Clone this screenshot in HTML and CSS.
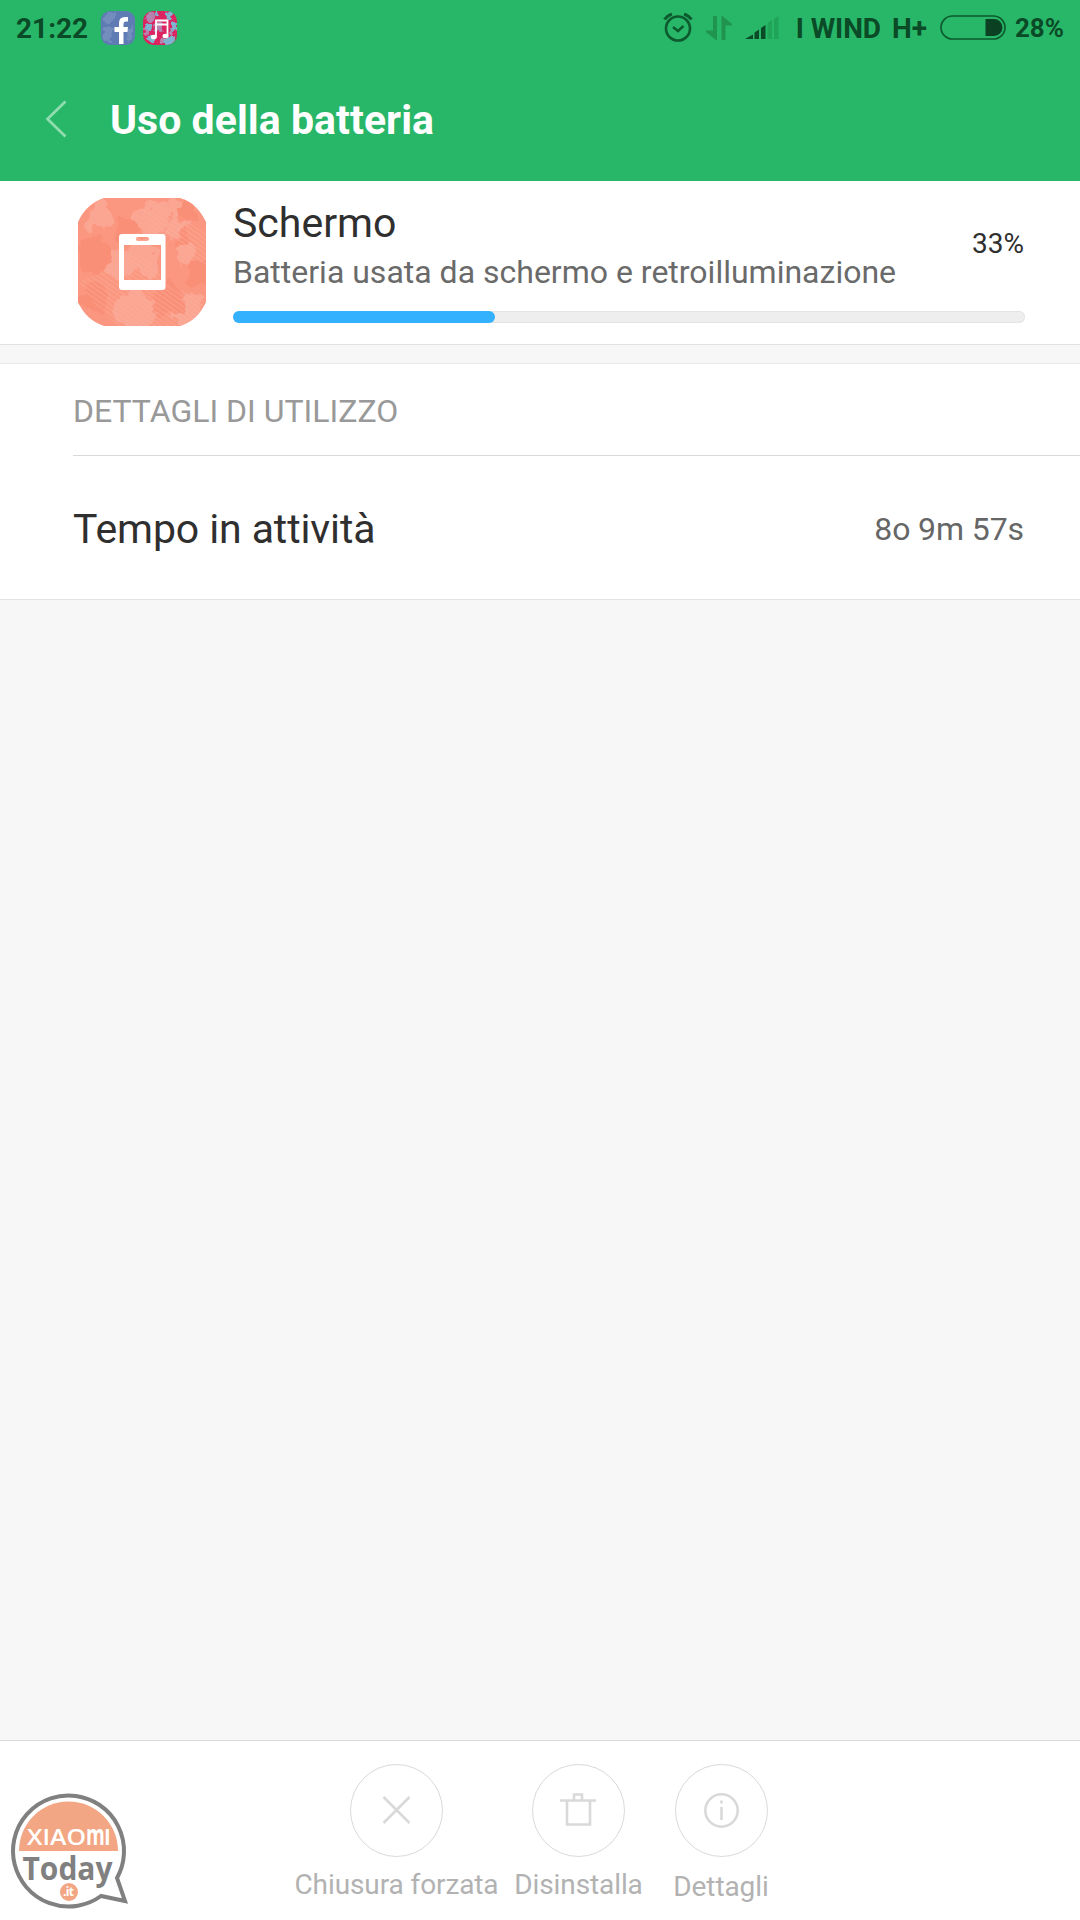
FILE: index.html
```html
<!DOCTYPE html>
<html lang="it">
<head>
  <meta charset="UTF-8">
  <meta name="viewport" content="width=device-width, initial-scale=1.0">
  <title>Uso della batteria</title>
  <link rel="stylesheet" href="styles.css">
</head>
<body>
  <div class="screen">
    <header class="header">
      <!-- Status bar -->
      <div class="status-bar">
        <span class="clock">21:22</span>
        <svg class="notif" width="34" height="34" viewBox="0 0 34 34">
          <defs>
            <clipPath id="fbShape"><rect width="34" height="34" rx="9"/></clipPath>
            <filter id="roughSmall" x="-10%" y="-10%" width="120%" height="120%">
              <feTurbulence type="fractalNoise" baseFrequency="0.2" numOctaves="2" seed="4"/>
              <feDisplacementMap in="SourceGraphic" scale="9" xChannelSelector="R" yChannelSelector="G"/>
            </filter>
          </defs>
          <g clip-path="url(#fbShape)">
            <rect width="34" height="34" fill="#5f7bb3"/>
            <path d="M2 6Q9 0 17 1L12 9L3 12ZM1 18L9 15L13 22L8 32Q1 31 1 24ZM25 20L33 15V27L26 31Z" fill="#7b97c2" opacity=".7" filter="url(#roughSmall)"/>
          </g>
          <path d="M18 33V21H13.500V16H18V12Q18 6 24 6H27V10.500H25Q22.500 10.500 22.500 13V16H27L26.500 21H22.500V33Z" fill="#fff"/>
        </svg>
        <svg class="notif" width="36" height="36" viewBox="0 0 36 36">
          <defs>
            <clipPath id="musicShape"><rect x="1" y="1" width="34" height="34" rx="10"/></clipPath>
          </defs>
          <g clip-path="url(#musicShape)">
            <rect width="36" height="36" fill="#dc2460"/>
            <g filter="url(#roughSmall)">
              <g fill="#7fb3cf">
                <circle cx="7" cy="16" r="4"/><circle cx="27" cy="6" r="4"/><circle cx="32" cy="17" r="4"/>
                <circle cx="9" cy="29" r="4"/><circle cx="27" cy="31" r="5"/><circle cx="15" cy="4" r="3"/>
              </g>
              <g fill="#b684b0">
                <circle cx="17" cy="17" r="5"/><circle cx="8" cy="7" r="4"/><circle cx="20" cy="30" r="3"/>
                <circle cx="30" cy="23" r="3"/><circle cx="3" cy="22" r="3"/>
              </g>
            </g>
          </g>
          <path d="M14 27V10.500H25.500V26M14 14.500H25.500" fill="none" stroke="#fff" stroke-width="1.800"/>
          <ellipse cx="11.800" cy="27" rx="3" ry="2.300" fill="#fff"/>
          <ellipse cx="23.500" cy="26" rx="3" ry="2.300" fill="#fff"/>
        </svg>
        <div class="status-right">
          <svg class="alarm" width="30" height="30" viewBox="0 0 30 30" fill="none" stroke="#0c5a2d">
            <circle cx="15" cy="15.500" r="12" stroke-width="2.600"/>
            <path d="M10 14L15 18L20.500 13" stroke-width="2.500"/>
            <path d="M1.500 6.500Q4 2.500 9 1M28.500 6.500Q26 2.500 21 1" stroke-width="3"/>
          </svg>
          <svg class="data" width="26" height="24" viewBox="0 0 26 24" fill="#1f934f">
            <path d="M7 0H11V24H10L0 16V14.500H7Z"/>
            <path d="M19.500 24H15.500V0H16.500L26 8V9.500H19.500Z"/>
          </svg>
          <svg class="signal" width="34" height="24" viewBox="0 0 34 24">
            <path d="M0 23L8 18.500V23ZM9.500 23V16.500L14 13.500V23ZM16 23V12L20.500 9V23Z" fill="#0b4a27"/>
            <path d="M22.500 23V7L27 4V23ZM29 23V3L33.500 0V23Z" fill="#1fa458"/>
          </svg>
          <span class="carrier">I WIND</span>
          <span class="network">H+</span>
          <svg class="battery" width="66" height="25" viewBox="0 0 66 25">
            <rect x="1" y="1" width="64" height="23" rx="11.500" fill="none" stroke="#0c5a2d" stroke-width="1.700"/>
            <path d="M45.500 4H54A8.500 8.500 0 0 1 54 21H45.500Z" fill="#0b4023"/>
          </svg>
          <span class="battery-level">28%</span>
        </div>
      </div>

      <div class="title-bar">
        <svg class="back" width="22" height="38" viewBox="0 0 22 38">
          <path d="M20.500 1.500L2.500 19L20.500 36.500" fill="none" stroke="#8fdcaf" stroke-width="2.800"/>
        </svg>
        <h1>Uso della batteria</h1>
      </div>
    </header>

    <!-- Battery usage summary -->
    <section class="summary">
      <svg class="app-icon" width="128" height="128" viewBox="0 0 128 128">
        <defs>
          <clipPath id="iconShape"><path d="M26 0H102Q119 5 128 24V104Q120 122 102 128H26Q8 122 0 104V24Q8 6 26 0Z"/></clipPath>
          <pattern id="hatch" width="4" height="4" patternUnits="userSpaceOnUse" patternTransform="rotate(35)">
            <rect width="4" height="1.200" fill="#fcb3a0"/>
          </pattern>
          <filter id="rough" x="-10%" y="-10%" width="120%" height="120%">
            <feTurbulence type="fractalNoise" baseFrequency="0.06" numOctaves="3" seed="7" result="noise"/>
            <feDisplacementMap in="SourceGraphic" in2="noise" scale="26" xChannelSelector="R" yChannelSelector="G"/>
            <feGaussianBlur stdDeviation="0.6"/>
          </filter>
        </defs>
        <g clip-path="url(#iconShape)">
          <rect width="128" height="128" fill="#fb9780"/>
          <g filter="url(#rough)">
            <g fill="#fba593">
              <circle cx="72" cy="22" r="17"/><circle cx="22" cy="18" r="13"/><circle cx="42" cy="66" r="15"/>
              <circle cx="108" cy="55" r="11"/><circle cx="64" cy="62" r="17"/><circle cx="58" cy="112" r="20"/>
              <circle cx="110" cy="112" r="16"/><circle cx="94" cy="10" r="10"/><circle cx="98" cy="28" r="9"/>
            </g>
            <g fill="#fa8f78">
              <circle cx="16" cy="54" r="17"/><circle cx="110" cy="14" r="10"/><circle cx="104" cy="42" r="8"/>
              <circle cx="88" cy="104" r="16"/><circle cx="118" cy="76" r="13"/><circle cx="14" cy="98" r="14"/>
              <circle cx="48" cy="30" r="11"/>
            </g>
          </g>
          <path d="M0 84L34 70L48 54L70 60L96 92L128 96V128H40L20 110ZM62 8L84 6L128 36V66L104 60L98 38L74 42Z" fill="url(#hatch)" opacity=".4"/>
        </g>
        <path d="M44 36H84.500Q87.500 36 87.500 39V89Q87.500 92 84.500 92H44Q41 92 41 89V39Q41 36 44 36ZM46 47V82H83V47ZM60 39Q58 39 58 41T60 43H69Q71 43 71 41T69 39Z" fill="#fff" fill-rule="evenodd"/>
      </svg>
      <div class="info">
        <div class="info-row">
          <div>
            <h2>Schermo</h2>
            <p class="description">Batteria usata da schermo e retroilluminazione</p>
          </div>
          <span class="percent">33%</span>
        </div>
        <div class="progress">
          <div class="progress-fill" style="width: 33.100%"></div>
        </div>
      </div>
    </section>

    <!-- Usage details -->
    <section class="details">
      <h3>DETTAGLI DI UTILIZZO</h3>
      <div class="detail-row">
        <span class="detail-name">Tempo in attività</span>
        <span class="detail-value">8o 9m 57s</span>
      </div>
    </section>

    <!-- Bottom actions -->
    <footer class="actions">
      <div class="action action-stop">
        <svg width="93" height="93" viewBox="0 0 93 93">
          <circle cx="46.500" cy="46.500" r="46"/>
          <path class="thick" d="M33.500 33L59.500 59M59.500 33L33.500 59"/>
        </svg>
        <span>Chiusura forzata</span>
      </div>
      <div class="action action-remove">
        <svg width="93" height="93" viewBox="0 0 93 93">
          <circle cx="46.500" cy="46.500" r="46"/>
          <path class="thick" d="M28 36.500H64M35 37V60.500H58V37M42 36V30.500H50V36"/>
        </svg>
        <span>Disinstalla</span>
      </div>
      <div class="action action-info">
        <svg width="93" height="93" viewBox="0 0 93 93">
          <circle cx="46.500" cy="46.500" r="46"/>
          <circle class="thick" cx="46.500" cy="46.500" r="16.200"/>
          <path class="thick" d="M46.500 43V56M46.500 36.500V39.500"/>
        </svg>
        <span>Dettagli</span>
      </div>
    </footer>

    <svg class="watermark" width="140" height="140" viewBox="0 0 140 140">
      <path d="M117 98A55.500 55.500 0 1 0 101 116L125 121Z" fill="#fff" stroke="#808080" stroke-width="4"/>
      <path d="M19 71A49.500 49.500 0 0 1 118 71Z" fill="#f3a683"/>
      <text class="wm-brand" x="27" y="64.500" textLength="59" lengthAdjust="spacingAndGlyphs">XIAO</text>
      <text class="wm-brand wm-mi" x="86" y="64.500" textLength="24" lengthAdjust="spacingAndGlyphs"><tspan class="wm-m">m</tspan>I</text>
      <text class="wm-today" x="22.500" y="99.500" textLength="90" lengthAdjust="spacingAndGlyphs">Today</text>
      <circle cx="69" cy="112" r="9" fill="#f3a683"/>
      <text class="wm-it" x="63" y="116" textLength="11">.it</text>
    </svg>
  </div>
</body>
</html>
```
FILE: styles.css
```css
body {
  font-family: Roboto, sans-serif;
  background-color: #f7f7f7;
  margin: 0;
}
h1, h2, h3, p {
  margin: 0;
  font-weight: normal;
}
svg {
  display: block;
  flex: none;
}
span, h1, h2, h3, p {
  white-space: nowrap;
}
.screen {
  position: relative;
  display: flex;
  flex-direction: column;
  height: 1920px;
  overflow: hidden;
}

/* header */
.header {
  height: 181px;
  background-color: #28b768;
}
.status-bar {
  display: flex;
  align-items: center;
  height: 56px;
  padding: 0 16px;
  color: #0b4a27;
  font-size: 28px;
  font-weight: bold;
}
.clock {
  width: 85px;
}
.notif + .notif {
  margin-left: 7px;
}
.status-right {
  display: flex;
  align-items: center;
  margin-left: auto;
}
.data {
  margin-left: 13px;
}
.signal {
  margin: 0 17px 0 13px;
}
.carrier {
  font-size: 28px;
  letter-spacing: -0.1px;
}
.network {
  margin: 0 13px 0 11px;
}
.battery {
  margin-bottom: 1px;
}
.battery-level {
  margin-left: 9px;
  font-size: 26px;
}
.title-bar {
  display: flex;
  align-items: center;
  height: 125px;
  box-sizing: border-box;
  padding-left: 45px;
}
.title-bar h1 {
  margin: 3px 0 0 43px;
  color: #fff;
  font-size: 41px;
  font-weight: bold;
  letter-spacing: 0.05px;
}

/* summary */
.summary {
  display: flex;
  gap: 27px;
  height: 146px;
  padding: 17px 55px 0 78px;
  background-color: #fff;
  border-bottom: 1px solid #e2e2e2;
}
.info {
  flex: 1;
}
.info-row {
  display: flex;
  justify-content: space-between;
  align-items: center;
  height: 94px;
}
.info h2 {
  color: #2f2f2f;
  font-size: 41px;
  line-height: 50px;
}
.description {
  margin-top: 4px;
  color: #6a6a6a;
  font-size: 32px;
  line-height: 40px;
}
.percent {
  margin: 0 1px 3px 0;
  color: #2f2f2f;
  font-size: 28px;
  line-height: 40px;
}
.progress {
  height: 12px;
  margin-top: 19px;
  box-sizing: border-box;
  border-radius: 6px;
  background-color: #eee;
  box-shadow: inset 0 0 0 1px #e4e4e4;
}
.progress-fill {
  height: 12px;
  border-radius: 6px;
  background-color: #33b1ff;
}

/* details */
.details {
  margin-top: 18px;
  background-color: #fff;
  border-top: 1px solid #e8e8e8;
  border-bottom: 1px solid #e2e2e2;
}
.details h3 {
  height: 91px;
  margin-left: 73px;
  border-bottom: 1px solid #d9d9d9;
  color: #999;
  font-size: 32px;
  line-height: 94px;
}
.detail-row {
  display: flex;
  justify-content: space-between;
  align-items: center;
  height: 143px;
  box-sizing: border-box;
  padding: 2px 56px 0 73px;
}
.detail-name {
  color: #2f2f2f;
  font-size: 41px;
  line-height: 50px;
  letter-spacing: -0.1px;
}
.detail-value {
  color: #666;
  font-size: 32px;
  letter-spacing: -0.1px;
}

/* actions */
.actions {
  display: flex;
  height: 156px;
  margin-top: auto;
  padding: 23px 0 0 295px;
  background-color: #fff;
  border-top: 1px solid #d9d9d9;
}
.action {
  display: flex;
  flex-direction: column;
  align-items: center;
  color: #b2b2b2;
  font-size: 28px;
  line-height: 32px;
}
.action-stop {
  width: 203px;
  margin-right: 16px;
}
.action-remove {
  width: 129px;
  margin-right: 30px;
}
.action-info {
  width: 96px;
}
.action svg {
  fill: none;
  stroke: #d9d9d9;
}
.action .thick {
  stroke-width: 2.600;
}
.action span {
  margin-top: 12px;
  letter-spacing: -0.1px;
}
.action-info span {
  margin-top: 14px;
}

/* logo over the bottom bar */
.watermark {
  position: absolute;
  left: 0;
  bottom: 0;
}
.wm-brand {
  fill: #fff;
  font: 600 22px "Open Sans", sans-serif;
}
.wm-mi {
  font-weight: 800;
}
.wm-m {
  font-weight: bold;
  font-size: 28px;
}
.wm-today {
  fill: #808080;
  font: bold 32px "Open Sans", sans-serif;
}
.wm-it {
  fill: #fff;
  font: bold 12px "Open Sans", sans-serif;
}
```
